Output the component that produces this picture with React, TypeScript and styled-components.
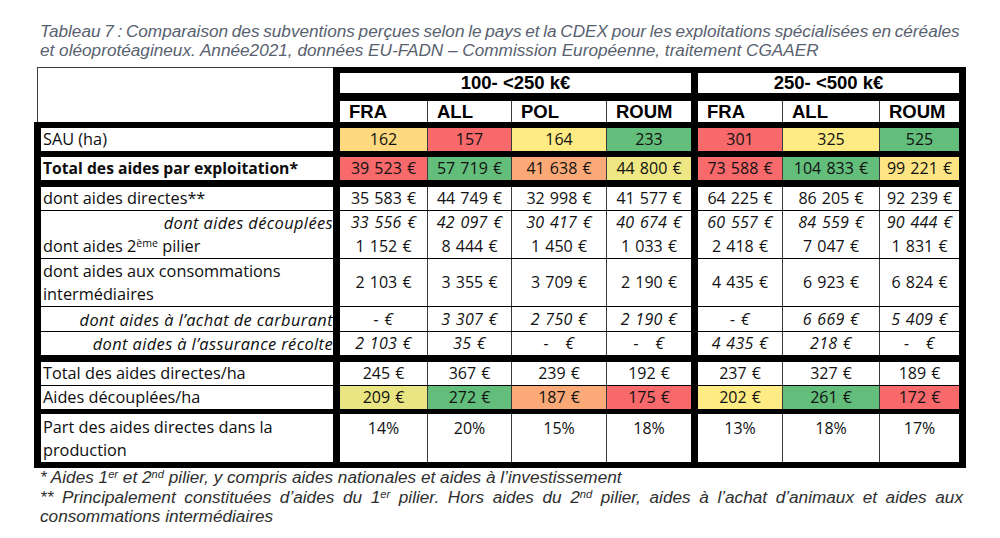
import React from "react";
import styled, { createGlobalStyle } from "styled-components";

const Global = createGlobalStyle`
  html, body { margin: 0; padding: 0; background: #fff; }
  body { font-family: "Liberation Sans", Arial, sans-serif; }
`;

const RED = "#F8696B";
const YELLOW = "#FFEB84";
const GREEN = "#63BE7B";
const ORANGE = "#FBAA77";
const YGREEN = "#E9E583";
const YGREEN2 = "#EFE784";
const YORANGE = "#FED97F";
const YORANGE2 = "#FFE483";

const Page = styled.div`
  width: 1000px;
  height: 538px;
  box-sizing: border-box;
  padding-top: 22px;
  overflow: hidden;
`;

const Caption = styled.div`
  margin: 0 0 7px 40px;
  width: 923px;
  font: italic 17.2px/19px "Liberation Sans", Arial, sans-serif;
  color: #58616f;
`;

const Notes = styled.div`
  margin: 0 0 0 40px;
  width: 923px;
  font: italic 17.2px/19.5px "Liberation Sans", Arial, sans-serif;
  color: #2e2e2e;
`;

const Line = styled.div<{ $justify?: boolean; $ws?: number }>`
  white-space: nowrap;
  word-spacing: ${(p) => p.$ws ?? 0}px;
  ${(p) =>
    p.$justify
      ? `white-space: normal; text-align: justify; text-align-last: justify;`
      : ``}
`;

const Sup = styled.sup`
  font-size: 0.65em;
  line-height: 0;
  vertical-align: 0.45em;
`;

const Table = styled.div`
  margin-left: 34px;
  width: 932px;
  box-sizing: border-box;
  background: #000;
  padding: 6px 7px;
  display: flex;
  flex-direction: column;
`;

const HeaderBand = styled.div`
  display: grid;
  grid-template-columns: 292px 351px 261px;
  grid-template-rows: 20px 21px;
  column-gap: 7px;
  row-gap: 8px;
`;

const Corner = styled.div`
  grid-row: 1 / 3;
  grid-column: 1;
  margin: -6px 0 0 -7px;
  background: #fff;
  box-shadow: inset 3px 0 0 #fff, inset 0 1px 0 #3a3a3a, inset 4px 0 0 #3a3a3a;
`;

const GroupTitle = styled.div`
  background: #fff;
  display: flex;
  align-items: center;
  justify-content: center;
  font: bold 18.5px/20px "Liberation Sans", Arial, sans-serif;
  color: #000;
`;

const Band = styled.div<{ $mt: number; $h: number }>`
  display: grid;
  grid-template-columns: 292px 351px 261px;
  column-gap: 7px;
  margin-top: ${(p) => p.$mt}px;
  height: ${(p) => p.$h}px;
`;

const Group = styled.div<{ $cols: string; $col?: number }>`
  display: grid;
  grid-template-columns: ${(p) => p.$cols};
  ${(p) => (p.$col ? `grid-column: ${p.$col};` : "")}
  column-gap: 1px;
  background: #3a3a3a;
`;

const SubHead = styled.div`
  background: #fff;
  display: flex;
  align-items: center;
  padding-left: 9px;
  font: bold 18.5px/21px "Liberation Sans", Arial, sans-serif;
  color: #000;
`;

const Label = styled.div<{ $bold?: boolean; $italic?: boolean; $right?: boolean; $top?: boolean }>`
  background: #fff;
  display: flex;
  align-items: ${(p) => (p.$top ? "flex-start" : "center")};
  justify-content: ${(p) => (p.$right ? "flex-end" : "flex-start")};
  padding: ${(p) => (p.$top ? "2px" : "0")} 0 0 2px;
  box-sizing: border-box;
  overflow: hidden;
  white-space: nowrap;
  font-family: "Open Sans", Lato, sans-serif;
  font-size: ${(p) => (p.$bold ? "15.7px" : p.$italic ? "16.4px" : "16.3px")};
  letter-spacing: ${(p) => (p.$italic ? "0.4px" : "0")};
  line-height: 23px;
  font-weight: ${(p) => (p.$bold ? 700 : 400)};
  font-style: ${(p) => (p.$italic ? "italic" : "normal")};
  color: #0d0d0d;
`;

const LabelText = styled.span`
  display: block;
`;

const Cell = styled.div<{ $bg?: string; $italic?: boolean; $top?: boolean }>`
  background: ${(p) => p.$bg || "#fff"};
  display: flex;
  align-items: ${(p) => (p.$top ? "flex-start" : "center")};
  justify-content: center;
  padding-top: ${(p) => (p.$top ? "3px" : "0")};
  white-space: pre;
  font-family: "Open Sans", Lato, sans-serif;
  font-size: 16px;
  word-spacing: 1px;
  letter-spacing: ${(p) => (p.$italic ? "0.3px" : "0")};
  line-height: 23px;
  font-style: ${(p) => (p.$italic ? "italic" : "normal")};
  color: #111;
`;

type Row = {
  label: React.ReactNode;
  h: number;
  mt: number;
  bold?: boolean;
  italic?: boolean;
  right?: boolean;
  top?: boolean;
  a: string[];
  b: string[];
  ca?: string[];
  cb?: string[];
};

const COLS_A = "87px 83px 94px 84px";
const COLS_B = "84px 96px 79px";

const rows: Row[] = [
  {
    label: "SAU (ha)",
    h: 23,
    mt: 6,
    a: ["162", "157", "164", "233"],
    b: ["301", "325", "525"],
    ca: [YORANGE, RED, YELLOW, GREEN],
    cb: [RED, YELLOW, GREEN],
  },
  {
    label: "Total des aides par exploitation*",
    h: 23,
    mt: 6,
    bold: true,
    a: ["39 523 €", "57 719 €", "41 638 €", "44 800 €"],
    b: ["73 588 €", "104 833 €", "99 221 €"],
    ca: [RED, GREEN, ORANGE, YGREEN2],
    cb: [RED, GREEN, YORANGE2],
  },
  {
    label: "dont aides directes**",
    h: 23,
    mt: 7,
    a: ["35 583 €", "44 749 €", "32 998 €", "41 577 €"],
    b: ["64 225 €", "86 205 €", "92 239 €"],
  },
  {
    label: "dont aides découplées",
    h: 22,
    mt: 1,
    italic: true,
    right: true,
    a: ["33 556 €", "42 097 €", "30 417 €", "40 674 €"],
    b: ["60 557 €", "84 559 €", "90 444 €"],
  },
  {
    label: (
      <>
        dont aides 2<Sup>ème</Sup> pilier
      </>
    ),
    h: 24,
    mt: 1,
    a: ["1 152 €", "8 444 €", "1 450 €", "1 033 €"],
    b: ["2 418 €", "7 047 €", "1 831 €"],
  },
  {
    label: (
      <>
        dont aides aux consommations
        <br />
        intermédiaires
      </>
    ),
    h: 47,
    mt: 1,
    a: ["2 103 €", "3 355 €", "3 709 €", "2 190 €"],
    b: ["4 435 €", "6 923 €", "6 824 €"],
  },
  {
    label: "dont aides à l’achat de carburant",
    h: 24,
    mt: 1,
    italic: true,
    right: true,
    a: ["- €", "3 307 €", "2 750 €", "2 190 €"],
    b: ["- €", "6 669 €", "5 409 €"],
  },
  {
    label: "dont aides à l’assurance récolte",
    h: 22,
    mt: 1,
    italic: true,
    right: true,
    a: ["2 103 €", "35 €", "-   €", "-   €"],
    b: ["4 435 €", "218 €", "-   €"],
  },
  {
    label: "Total des aides directes/ha",
    h: 23,
    mt: 8,
    a: ["245 €", "367 €", "239 €", "192 €"],
    b: ["237 €", "327 €", "189 €"],
  },
  {
    label: "Aides découplées/ha",
    h: 23,
    mt: 1,
    a: ["209 €", "272 €", "187 €", "175 €"],
    b: ["202 €", "261 €", "172 €"],
    ca: [YGREEN, GREEN, ORANGE, RED],
    cb: [YELLOW, GREEN, RED],
  },
  {
    label: (
      <>
        Part des aides directes dans la
        <br />
        production
      </>
    ),
    h: 48,
    mt: 5,
    top: true,
    a: ["14%", "20%", "15%", "18%"],
    b: ["13%", "18%", "17%"],
  },
];

export default function App() {
  return (
    <Page>
      <Global />
      <Caption>
        <Line $ws={-1.1}>
          Tableau 7 : Comparaison des subventions perçues selon le pays et la CDEX pour les exploitations spécialisées en céréales
        </Line>
        <Line>et oléoprotéagineux. Année2021, données EU-FADN – Commission Européenne, traitement CGAAER</Line>
      </Caption>
      <Table>
        <HeaderBand>
          <Corner />
          <GroupTitle>100- &lt;250 k€</GroupTitle>
          <GroupTitle>250- &lt;500 k€</GroupTitle>
          <Group $cols={COLS_A} $col={2}>
            {["FRA", "ALL", "POL", "ROUM"].map((c) => (
              <SubHead key={c}>{c}</SubHead>
            ))}
          </Group>
          <Group $cols={COLS_B} $col={3}>
            {["FRA", "ALL", "ROUM"].map((c) => (
              <SubHead key={c}>{c}</SubHead>
            ))}
          </Group>
        </HeaderBand>
        {rows.map((r, i) => (
          <Band key={i} $mt={r.mt} $h={r.h}>
            <Label $bold={r.bold} $italic={r.italic} $right={r.right} $top={r.top}>
              <LabelText>{r.label}</LabelText>
            </Label>
            <Group $cols={COLS_A}>
              {r.a.map((v, j) => (
                <Cell key={j} $bg={r.ca?.[j]} $italic={r.italic} $top={r.top}>
                  {v}
                </Cell>
              ))}
            </Group>
            <Group $cols={COLS_B}>
              {r.b.map((v, j) => (
                <Cell key={j} $bg={r.cb?.[j]} $italic={r.italic} $top={r.top}>
                  {v}
                </Cell>
              ))}
            </Group>
          </Band>
        ))}
      </Table>
      <Notes>
        <Line>
          * Aides 1<Sup>er</Sup> et 2<Sup>nd</Sup> pilier, y compris aides nationales et aides à l’investissement
        </Line>
        <Line $justify>
          ** Principalement constituées d’aides du 1<Sup>er</Sup> pilier. Hors aides du 2<Sup>nd</Sup> pilier, aides à l’achat d’animaux et aides aux
        </Line>
        <Line>consommations intermédiaires</Line>
      </Notes>
    </Page>
  );
}
